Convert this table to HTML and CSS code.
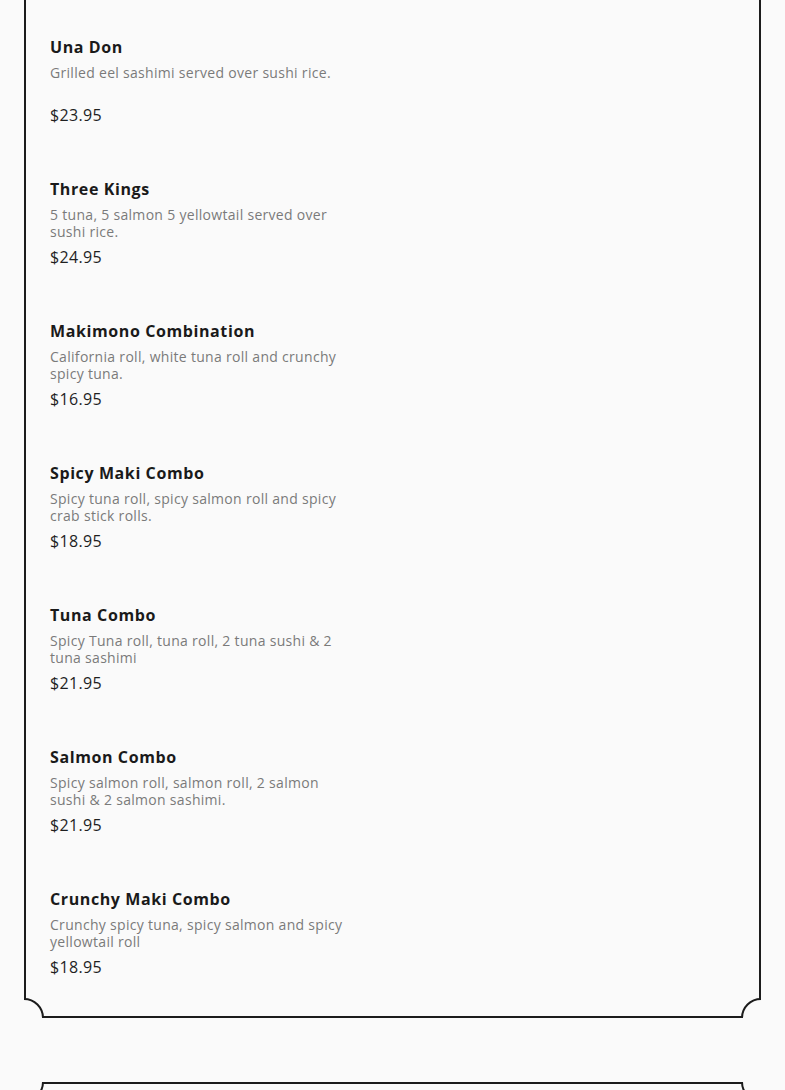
FILE: index.html
```html
<!DOCTYPE html>
<html lang="en">
<head>
<meta charset="utf-8">
<title>Menu</title>
<link rel="stylesheet" href="styles.css">
</head>
<body>
<div class="page">
  <section class="card card-first">
    <span class="frame"></span>
    <span class="scoop scoop-bl"></span>
    <span class="scoop scoop-br"></span>
    <div class="items">
      <article class="item">
        <h3 class="item-name">Una Don</h3>
        <p class="item-desc">Grilled eel sashimi served over sushi rice.</p>
        <p class="item-price">$23.95</p>
      </article>
      <article class="item">
        <h3 class="item-name">Three Kings</h3>
        <p class="item-desc">5 tuna, 5 salmon 5 yellowtail served over sushi rice.</p>
        <p class="item-price">$24.95</p>
      </article>
      <article class="item">
        <h3 class="item-name">Makimono Combination</h3>
        <p class="item-desc">California roll, white tuna roll and crunchy spicy tuna.</p>
        <p class="item-price">$16.95</p>
      </article>
      <article class="item">
        <h3 class="item-name">Spicy Maki Combo</h3>
        <p class="item-desc">Spicy tuna roll, spicy salmon roll and spicy crab stick rolls.</p>
        <p class="item-price">$18.95</p>
      </article>
      <article class="item">
        <h3 class="item-name">Tuna Combo</h3>
        <p class="item-desc">Spicy Tuna roll, tuna roll, 2 tuna sushi &amp; 2 tuna sashimi</p>
        <p class="item-price">$21.95</p>
      </article>
      <article class="item">
        <h3 class="item-name">Salmon Combo</h3>
        <p class="item-desc">Spicy salmon roll, salmon roll, 2 salmon sushi &amp; 2 salmon sashimi.</p>
        <p class="item-price">$21.95</p>
      </article>
      <article class="item">
        <h3 class="item-name">Crunchy Maki Combo</h3>
        <p class="item-desc">Crunchy spicy tuna, spicy salmon and spicy yellowtail roll</p>
        <p class="item-price">$18.95</p>
      </article>
    </div>
  </section>
  <section class="card card-next">
    <span class="frame"></span>
    <span class="scoop scoop-tl"></span>
    <span class="scoop scoop-tr"></span>
  </section>
</div>
</body>
</html>
```
FILE: styles.css
```css
* { box-sizing: border-box; }
html, body {
  margin: 0;
  padding: 0;
  background: #fafafa;
  overflow: hidden;
}
body {
  font-family: "Open Sans", "DejaVu Sans", sans-serif;
  color: #1c1c1c;
}
.page {
  display: flex;
  flex-direction: column;
  gap: 64px;
  padding: 0 24px;
}
.card {
  position: relative;
  overflow: hidden;
}
.card-first {
  margin-top: -60px;
  padding: 97px 26px 41px;
}
.card-next {
  height: 200px;
}
.frame {
  position: absolute;
  inset: 0;
  border: 2px solid #1c1c1c;
  pointer-events: none;
}
.scoop {
  position: absolute;
  width: 40px;
  height: 40px;
  border: 2px solid #1c1c1c;
  border-radius: 50%;
  background: #fafafa;
}
.scoop-bl { left: -20px; bottom: -20px; }
.scoop-br { right: -20px; bottom: -20px; }
.scoop-tl { left: -20px; top: -20px; }
.scoop-tr { right: -20px; top: -20px; }
.items {
  display: flex;
  flex-direction: column;
  gap: 54px;
  width: 302px;
}
.item {
  display: flex;
  flex-direction: column;
}
.item-name {
  margin: 0;
  font-size: 16px;
  line-height: 20px;
  font-weight: 700;
  letter-spacing: 0.6px;
  color: #1a1a1a;
}
.item-desc {
  margin: 7px 0 0;
  font-size: 14px;
  line-height: 17px;
  min-height: 34px;
  letter-spacing: 0.3px;
  color: #7a7a7a;
}
.item-price {
  margin: 7px 0 0;
  font-size: 16px;
  line-height: 20px;
  letter-spacing: 0.35px;
  color: #1f1f1f;
}
```
